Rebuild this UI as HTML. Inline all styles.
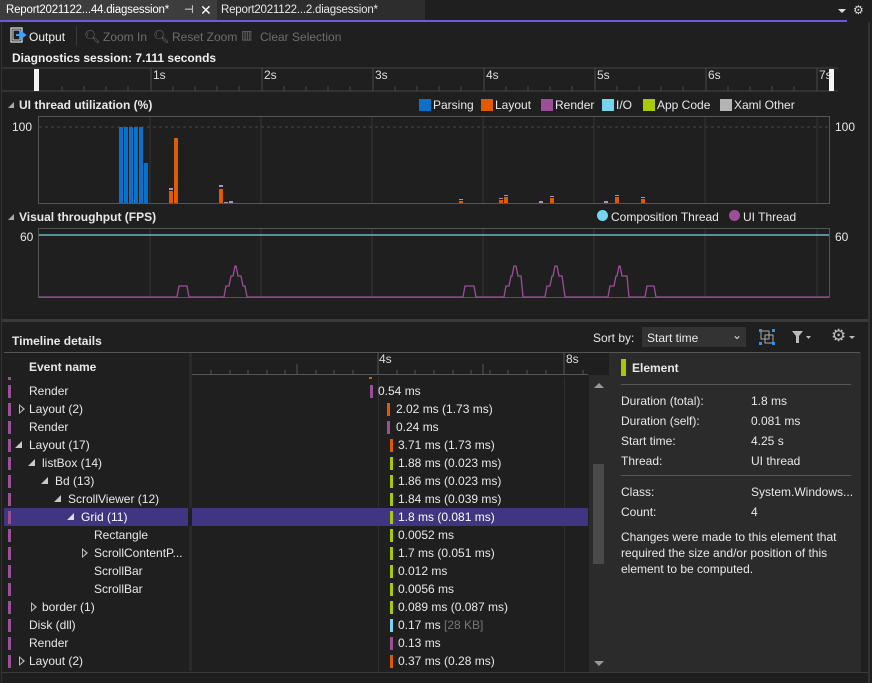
<!DOCTYPE html>
<html><head><meta charset="utf-8"><style>
*{margin:0;padding:0;box-sizing:border-box}
body{width:872px;height:683px;background:#1f1f1f;font-family:"Liberation Sans",sans-serif;font-size:12px;color:#e8e8e8;position:relative;overflow:hidden}
.a{position:absolute;white-space:nowrap}
.b{font-weight:bold}
.dim{color:#6d6d6d}
.row{position:absolute;left:4px;width:584px;height:18px}
.row .m{position:absolute;left:4px;top:3px;width:3px;height:13px;background:#9b4f96}
.row .t{position:absolute;top:2px}
.row .bar{position:absolute;top:3px;width:3px;height:13px}
.row .v{position:absolute;top:2px}
.tri{position:absolute;top:5px;width:0;height:0;border-left:7px solid transparent;border-bottom:7px solid #c8c8c8}
.tro{position:absolute;top:4px;width:0;height:0;border-top:5px solid transparent;border-bottom:5px solid transparent;border-left:6px solid #bbb}
.tro:after{content:"";position:absolute;left:-5px;top:-3px;border-top:3px solid transparent;border-bottom:3px solid transparent;border-left:3px solid #1f1f1f}
</style></head><body>
<!-- tabs -->
<div class="a" style="left:0;top:0;width:218px;height:20px;background:#3d3d3d"></div>
<div class="a" style="left:6px;top:4px;color:#fff;font-size:11.5px;letter-spacing:-0.2px">Report2021122...44.diagsession*</div>
<div class="a" style="left:184px;top:3px;color:#fff;font-size:11px">⊣</div>
<div class="a" style="left:200px;top:2px;color:#fff;font-size:14px">✕</div>
<div class="a" style="left:217px;top:0;width:208px;height:20px;background:#2d2d2d"></div>
<div class="a" style="left:221px;top:4px;color:#e8e8e8;font-size:11.5px;letter-spacing:-0.2px">Report2021122...2.diagsession*</div>
<div class="a" style="left:0;top:20px;width:847px;height:2px;background:#6e5ad8"></div>
<div class="a" style="left:838px;top:9px;border-left:4px solid transparent;border-right:4px solid transparent;border-top:4px solid #ddd"></div>
<div class="a" style="left:853px;top:3px;color:#ddd;font-size:12px">⚙</div>
<div class="a" style="left:868px;top:22px;width:2px;height:661px;background:#333"></div>
<div class="a" style="left:1px;top:22px;width:1px;height:661px;background:#333"></div>
<!-- toolbar -->
<svg class="a" style="left:10px;top:27px" width="18" height="17"><rect x="1" y="1" width="11" height="14" fill="none" stroke="#ddd" stroke-width="1.3"/><rect x="3" y="3" width="7" height="10" fill="none" stroke="#ddd"/><path d="M6 8h7M11 5l4 3-4 3z" stroke="#3f9fff" stroke-width="2" fill="#3f9fff"/></svg>
<div class="a" style="left:29px;top:30px;color:#f0f0f0">Output</div>
<div class="a" style="left:76px;top:26px;width:1px;height:20px;background:#3a3a3a"></div>
<div class="a dim" style="left:84px;top:29px;font-size:13px">🔍︎</div>
<div class="a dim" style="left:103px;top:30px">Zoom In</div>
<div class="a dim" style="left:153px;top:29px;font-size:13px">🔍︎</div>
<div class="a dim" style="left:172px;top:30px">Reset Zoom</div>
<div class="a dim" style="left:241px;top:28px;font-size:12px">▥</div>
<div class="a dim" style="left:260px;top:30px">Clear Selection</div>
<div class="a b" style="left:12px;top:51px;color:#f0f0f0">Diagnostics session: 7.111 seconds</div>
<!-- ruler -->
<svg class="a" style="left:0;top:66px" width="868" height="28">
<line x1="2" y1="2" x2="838" y2="2" stroke="#444"/><line x1="2" y1="25" x2="838" y2="25" stroke="#444"/>
<rect x="34" y="3" width="5" height="22" fill="#f4f4f4"/><rect x="829" y="3" width="5" height="22" fill="#f4f4f4"/>
<g stroke="#4a4a4a"><line x1="151" y1="2" x2="151" y2="25"/><line x1="262" y1="2" x2="262" y2="25"/><line x1="373" y1="2" x2="373" y2="25"/><line x1="484" y1="2" x2="484" y2="25"/><line x1="595" y1="2" x2="595" y2="25"/><line x1="706" y1="2" x2="706" y2="25"/><line x1="817" y1="2" x2="817" y2="25"/>
<path d="M62 20v5M84 20v5M106 20v5M128 20v5M173 20v5M195 20v5M217 20v5M239 20v5M284 20v5M306 20v5M328 20v5M350 20v5M395 20v5M417 20v5M439 20v5M461 20v5M506 20v5M528 20v5M550 20v5M572 20v5M617 20v5M639 20v5M661 20v5M683 20v5M728 20v5M750 20v5M772 20v5M794 20v5"/></g>
<g fill="#ddd" font-family="Liberation Sans" font-size="12"><text x="153" y="13">1s</text><text x="264" y="13">2s</text><text x="375" y="13">3s</text><text x="486" y="13">4s</text><text x="597" y="13">5s</text><text x="708" y="13">6s</text><text x="819" y="13">7s</text></g></svg>
<!-- UI thread -->
<div class="a" style="left:8px;top:102px;border-left:6px solid transparent;border-bottom:6px solid #aaa"></div>
<div class="a b" style="left:19px;top:98px">UI thread utilization (%)</div>
<div class="a" style="left:419px;top:99px;width:12px;height:12px;background:#0e6fc7"></div><div class="a" style="left:433px;top:98px">Parsing</div>
<div class="a" style="left:481px;top:99px;width:12px;height:12px;background:#e05a00"></div><div class="a" style="left:495px;top:98px">Layout</div>
<div class="a" style="left:541px;top:99px;width:12px;height:12px;background:#9b4f96"></div><div class="a" style="left:555px;top:98px">Render</div>
<div class="a" style="left:602px;top:99px;width:12px;height:12px;background:#76d4f0"></div><div class="a" style="left:616px;top:98px">I/O</div>
<div class="a" style="left:643px;top:99px;width:12px;height:12px;background:#a9c900"></div><div class="a" style="left:657px;top:98px">App Code</div>
<div class="a" style="left:720px;top:99px;width:12px;height:12px;background:#b4b4b4"></div><div class="a" style="left:734px;top:98px">Xaml Other</div>
<div class="a" style="left:12px;top:120px">100</div><div class="a" style="left:835px;top:120px">100</div>
<div class="a" style="left:20px;top:230px">60</div><div class="a" style="left:835px;top:230px">60</div>
<div class="a" style="left:8px;top:214px;border-left:6px solid transparent;border-bottom:6px solid #aaa"></div>
<div class="a b" style="left:19px;top:210px">Visual throughput (FPS)</div>
<div class="a" style="left:597px;top:210px;width:11px;height:11px;border-radius:50%;background:#76d4f0"></div><div class="a" style="left:611px;top:210px">Composition Thread</div>
<div class="a" style="left:729px;top:210px;width:11px;height:11px;border-radius:50%;background:#9b4f96"></div><div class="a" style="left:743px;top:210px">UI Thread</div>
<svg class="a" style="left:0;top:110px" width="868" height="200">
<rect x="38.5" y="6.5" width="791" height="87" fill="none" stroke="#555"/>
<g stroke="#363636"><line x1="150" y1="7" x2="150" y2="93"/><line x1="261" y1="7" x2="261" y2="93"/><line x1="372" y1="7" x2="372" y2="93"/><line x1="483" y1="7" x2="483" y2="93"/><line x1="594" y1="7" x2="594" y2="93"/><line x1="705" y1="7" x2="705" y2="93"/><line x1="817" y1="7" x2="817" y2="93"/>
<line x1="150" y1="119" x2="150" y2="187"/><line x1="261" y1="119" x2="261" y2="187"/><line x1="372" y1="119" x2="372" y2="187"/><line x1="483" y1="119" x2="483" y2="187"/><line x1="594" y1="119" x2="594" y2="187"/><line x1="705" y1="119" x2="705" y2="187"/><line x1="817" y1="119" x2="817" y2="187"/></g>
<line x1="39" y1="17" x2="829" y2="17" stroke="#444" stroke-dasharray="3,3"/>
<g fill="#0e6fc7"><rect x="119" y="17" width="4" height="76"/><rect x="124" y="17" width="4" height="76"/><rect x="129" y="17" width="4" height="76"/><rect x="134" y="17" width="4" height="76"/><rect x="139" y="17" width="4" height="76"/><rect x="144" y="53" width="4" height="40"/></g>
<g fill="#e05a00"><rect x="169" y="81" width="4" height="12"/><rect x="174" y="28" width="4" height="65"/><rect x="219" y="79" width="4" height="14"/>
<rect x="459" y="91" width="4" height="2"/><rect x="499" y="90" width="4" height="3"/><rect x="504" y="87" width="4" height="6"/><rect x="550" y="88" width="4" height="5"/><rect x="615" y="87" width="4" height="6"/><rect x="641" y="89" width="4" height="4"/></g>
<g fill="#b48cc0"><rect x="169" y="78" width="4" height="2"/><rect x="219" y="75" width="4" height="2"/><rect x="224" y="92" width="4" height="1"/><rect x="229" y="91" width="4" height="2"/><rect x="459" y="89" width="4" height="1"/><rect x="499" y="88" width="4" height="1"/><rect x="504" y="85" width="4" height="1"/><rect x="539" y="91" width="4" height="2"/><rect x="550" y="86" width="4" height="1"/><rect x="604" y="91" width="4" height="2"/><rect x="615" y="85" width="4" height="1"/><rect x="641" y="87" width="4" height="1"/></g>
<rect x="38.5" y="118.5" width="791" height="69" fill="none" stroke="#555"/>
<line x1="39" y1="125" x2="829" y2="125" stroke="#6fb6c4" stroke-width="1.5"/>
<path d="M39 187H177L179 176H187L189 187H224L226 176H229L231 166H233L235 156H236L238 166H241L243 176H245L247 187H463L465 176H474L476 187H504L506 176H509L511 166H512L514 156H516L518 166H521L523 187H545L547 176H550L552 166H553L555 156H557L559 166H562L565 187H608L610 176H614L616 166H617L619 156H620L622 166H627L629 187H645L647 176H654L656 187H829" fill="none" stroke="#9b4f96" stroke-width="1.3"/>
</svg>
<!-- divider -->
<div class="a" style="left:2px;top:319px;width:866px;height:3px;background:#3a3a3a"></div>
<div class="a b" style="left:12px;top:334px">Timeline details</div>
<div class="a" style="left:593px;top:331px">Sort by:</div>
<div class="a" style="left:642px;top:327px;width:104px;height:20px;background:#333"></div>
<div class="a" style="left:647px;top:331px">Start time</div>
<div class="a" style="left:732px;top:328px;font-size:12px;color:#ddd">⌄</div>
<svg class="a" style="left:758px;top:328px" width="18" height="18"><rect x="3" y="3" width="8" height="8" fill="none" stroke="#aaa"/><rect x="7" y="7" width="8" height="8" fill="none" stroke="#aaa"/><g fill="#3a8fe0"><rect x="1" y="1" width="3" height="3"/><rect x="14" y="1" width="3" height="3"/><rect x="1" y="14" width="3" height="3"/><rect x="14" y="14" width="3" height="3"/></g></svg>
<svg class="a" style="left:791px;top:330px" width="22" height="14"><path d="M1 1h11l-4 5v7h-3v-7z" fill="#bbb"/><path d="M15 6h5l-2.5 3z" fill="#bbb"/></svg>
<div class="a" style="left:831px;top:326px;font-size:17px;color:#bbb">⚙</div>
<div class="a" style="left:849px;top:336px;border-left:3px solid transparent;border-right:3px solid transparent;border-top:3px solid #bbb"></div>
<div class="a" style="left:4px;top:352px;width:856px;height:1px;background:#555"></div>
<!-- table -->
<div class="a b" style="left:29px;top:360px">Event name</div>
<div class="a" style="left:189px;top:353px;width:3px;height:318px;background:#2a2a2a"></div>
<svg class="a" style="left:192px;top:353px" width="396" height="24"><line x1="0" y1="21.5" x2="396" y2="21.5" stroke="#555"/><g stroke="#555"><path d="M186 0v21M372 0v21M105 11v10"/><path d="M19 17v4M38 17v4M56 17v4M75 17v4M93 17v4M124 17v4M142 17v4M161 17v4M205 17v4M223 17v4M242 17v4M261 17v4M279 17v4M298 17v4M316 17v4M335 17v4M354 17v4M391 17v4"/><path d="M291 11v10"/></g>
<g fill="#ddd" font-family="Liberation Sans" font-size="12"><text x="187" y="10">4s</text><text x="374" y="10">8s</text></g></svg>
<div class="a" style="left:378px;top:377px;width:1px;height:295px;background:#303030"></div>
<div class="a" style="left:564px;top:377px;width:1px;height:295px;background:#303030"></div>
<div class="a" style="left:369px;top:377px;width:3px;height:2px;background:#e05a00"></div>
<div class="a" style="left:8px;top:377px;width:3px;height:3px;background:#9b4f96"></div>

<div class="row" style="top:382px"><div class="m"></div><div class="t" style="left:25px">Render</div><div class="bar" style="left:366px;background:#9b4f96"></div><div class="v" style="left:374px">0.54 ms</div></div>
<div class="row" style="top:400px"><div class="m"></div><div class="tro" style="left:15px"></div><div class="t" style="left:25px">Layout (2)</div><div class="bar" style="left:383px;background:#e05a00"></div><div class="v" style="left:392px">2.02 ms (1.73 ms)</div></div>
<div class="row" style="top:418px"><div class="m"></div><div class="t" style="left:25px">Render</div><div class="bar" style="left:383px;background:#9b4f96"></div><div class="v" style="left:392px">0.24 ms</div></div>
<div class="row" style="top:436px"><div class="m"></div><div class="tri" style="left:11px"></div><div class="t" style="left:25px">Layout (17)</div><div class="bar" style="left:386px;background:#e05a00"></div><div class="v" style="left:394px">3.71 ms (1.73 ms)</div></div>
<div class="row" style="top:454px"><div class="m"></div><div class="tri" style="left:24px"></div><div class="t" style="left:38px">listBox (14)</div><div class="bar" style="left:386px;background:#a9c900"></div><div class="v" style="left:394px">1.88 ms (0.023 ms)</div></div>
<div class="row" style="top:472px"><div class="m"></div><div class="tri" style="left:37px"></div><div class="t" style="left:51px">Bd (13)</div><div class="bar" style="left:386px;background:#a9c900"></div><div class="v" style="left:394px">1.86 ms (0.023 ms)</div></div>
<div class="row" style="top:490px"><div class="m"></div><div class="tri" style="left:50px"></div><div class="t" style="left:64px">ScrollViewer (12)</div><div class="bar" style="left:386px;background:#a9c900"></div><div class="v" style="left:394px">1.84 ms (0.039 ms)</div></div>
<div class="row" style="top:508px;background:#3f3581"><div class="a" style="left:184px;top:0;width:4px;height:18px;background:#1f1f1f"></div><div class="m"></div><div class="tri" style="left:63px;border-bottom-color:#ddd"></div><div class="t" style="left:77px;color:#fff">Grid (11)</div><div class="bar" style="left:386px;background:#a9c900"></div><div class="v" style="left:394px;color:#fff">1.8 ms (0.081 ms)</div></div>
<div class="row" style="top:526px"><div class="m"></div><div class="t" style="left:90px">Rectangle</div><div class="bar" style="left:386px;background:#a9c900"></div><div class="v" style="left:394px">0.0052 ms</div></div>
<div class="row" style="top:544px"><div class="m"></div><div class="tro" style="left:78px"></div><div class="t" style="left:90px">ScrollContentP...</div><div class="bar" style="left:386px;background:#a9c900"></div><div class="v" style="left:394px">1.7 ms (0.051 ms)</div></div>
<div class="row" style="top:562px"><div class="m"></div><div class="t" style="left:90px">ScrollBar</div><div class="bar" style="left:386px;background:#a9c900"></div><div class="v" style="left:394px">0.012 ms</div></div>
<div class="row" style="top:580px"><div class="m"></div><div class="t" style="left:90px">ScrollBar</div><div class="bar" style="left:386px;background:#a9c900"></div><div class="v" style="left:394px">0.0056 ms</div></div>
<div class="row" style="top:598px"><div class="m"></div><div class="tro" style="left:27px"></div><div class="t" style="left:38px">border (1)</div><div class="bar" style="left:386px;background:#a9c900"></div><div class="v" style="left:394px">0.089 ms (0.087 ms)</div></div>
<div class="row" style="top:616px"><div class="m"></div><div class="t" style="left:25px">Disk (dll)</div><div class="bar" style="left:386px;background:#76d4f0"></div><div class="v" style="left:394px">0.17 ms <span style="color:#777">[28 KB]</span></div></div>
<div class="row" style="top:634px"><div class="m"></div><div class="t" style="left:25px">Render</div><div class="bar" style="left:386px;background:#9b4f96"></div><div class="v" style="left:394px">0.13 ms</div></div>
<div class="row" style="top:652px"><div class="m"></div><div class="tro" style="left:15px"></div><div class="t" style="left:25px">Layout (2)</div><div class="bar" style="left:386px;background:#e05a00"></div><div class="v" style="left:394px">0.37 ms (0.28 ms)</div></div>
<!-- scrollbar -->
<div class="a" style="left:589px;top:375px;width:20px;height:297px;background:#2b2b2b"></div>
<div class="a" style="left:594px;top:383px;border-left:5px solid transparent;border-right:5px solid transparent;border-bottom:5px solid #999"></div>
<div class="a" style="left:593px;top:464px;width:11px;height:100px;background:#4a4a4a"></div>
<div class="a" style="left:594px;top:661px;border-left:5px solid transparent;border-right:5px solid transparent;border-top:5px solid #999"></div>
<div class="a" style="left:2px;top:672px;width:866px;height:1px;background:#3a3a3a"></div>
<!-- details panel -->
<div class="a" style="left:609px;top:353px;width:252px;height:319px;background:#2b2b2b"></div>
<div class="a" style="left:621px;top:359px;width:5px;height:17px;background:#a9c900"></div>
<div class="a b" style="left:632px;top:361px">Element</div>
<div class="a" style="left:621px;top:384px;width:230px;height:1px;background:#555"></div>
<div class="a" style="left:621px;top:394px">Duration (total):</div><div class="a" style="left:751px;top:394px">1.8 ms</div>
<div class="a" style="left:621px;top:414px">Duration (self):</div><div class="a" style="left:751px;top:414px">0.081 ms</div>
<div class="a" style="left:621px;top:434px">Start time:</div><div class="a" style="left:751px;top:434px">4.25 s</div>
<div class="a" style="left:621px;top:454px">Thread:</div><div class="a" style="left:751px;top:454px">UI thread</div>
<div class="a" style="left:621px;top:475px;width:230px;height:1px;background:#555"></div>
<div class="a" style="left:621px;top:485px">Class:</div><div class="a" style="left:751px;top:485px">System.Windows...</div>
<div class="a" style="left:621px;top:505px">Count:</div><div class="a" style="left:751px;top:505px">4</div>
<div class="a" style="left:621px;top:529px;line-height:16px;white-space:normal;width:235px">Changes were made to this element that required the size and/or position of this element to be computed.</div>
</body></html>
